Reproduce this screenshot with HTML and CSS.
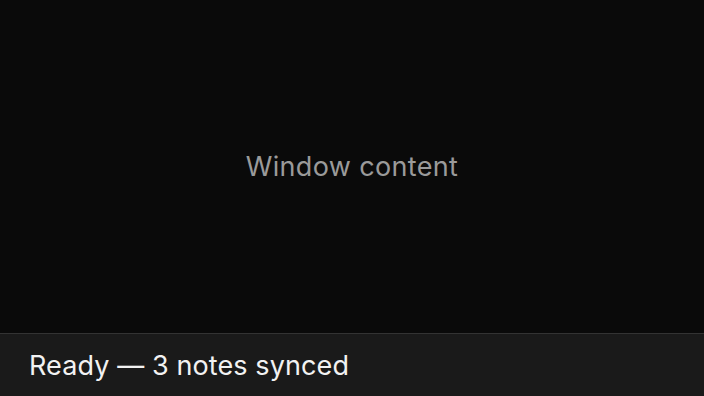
FILE: index.html
```html
<!DOCTYPE html>
<html lang="en">
<head>
    <meta charset="UTF-8">
    <meta name="viewport" content="width=device-width, initial-scale=1.0">
    <title>Window</title>
    <link rel="stylesheet" href="styles.css">
</head>
<body>
    <div class="window">
        <main class="content">Window content</main>
        <footer class="status-bar">Ready — 3 notes synced</footer>
    </div>
</body>
</html>
```

FILE: styles.css
```css
html, body {
    margin: 0;
    padding: 0;
    height: 100%;
}

body {
    background-color: #0a0a0a;
    font-family: Inter, "Noto Sans", sans-serif;
    color: #fff;
}

.window {
    display: flex;
    flex-direction: column;
    height: 100%;
}

.content {
    flex: 1;
    display: flex;
    align-items: center;
    justify-content: center;
    font-size: 27px;
    letter-spacing: 0.35px;
    color: #9a9a9a;
}

.status-bar {
    height: 63px;
    box-sizing: border-box;
    border-top: 1px solid #333;
    background-color: #1a1a1a;
    padding: 0 29px;
    display: flex;
    align-items: center;
    font-size: 27px;
    letter-spacing: 0.1px;
    color: #f2f2f2;
}
```
